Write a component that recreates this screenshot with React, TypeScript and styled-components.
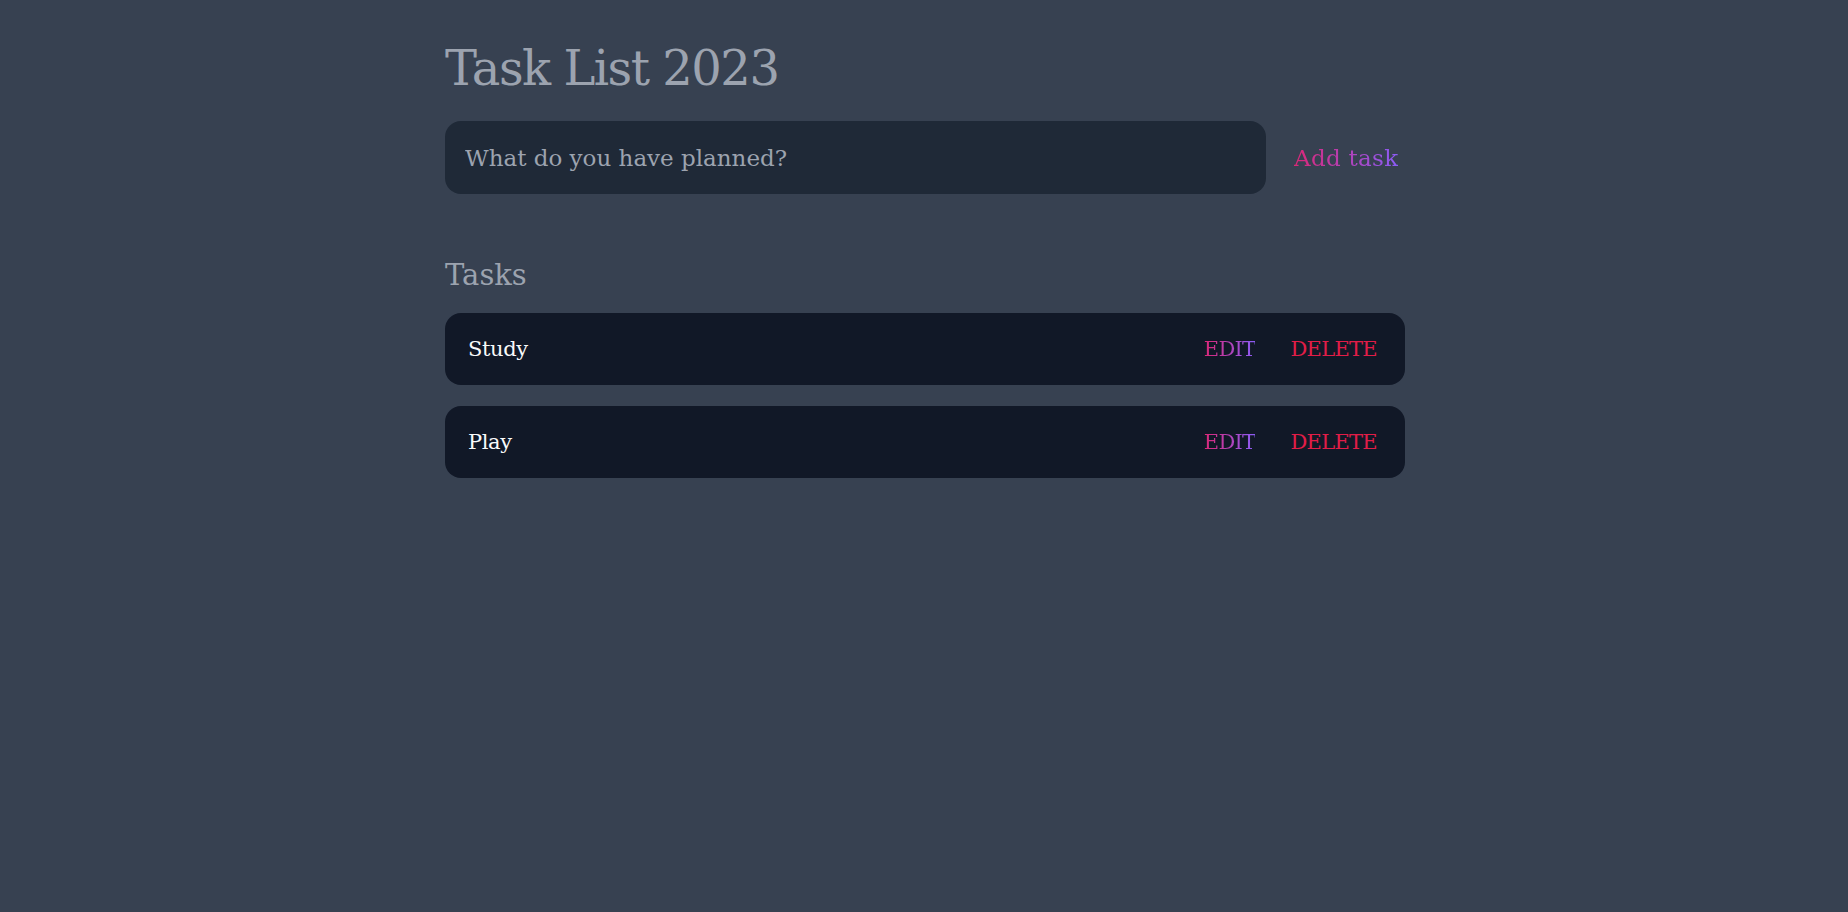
import React, { useState } from "react";
import styled, { createGlobalStyle } from "styled-components";

const GlobalStyle = createGlobalStyle`
  html, body {
    margin: 0;
    padding: 0;
    background: #374151;
  }
  body {
    font-family: "DejaVu Serif", "Liberation Serif", serif;
    min-height: 100vh;
  }
  * { box-sizing: border-box; }
`;

const Page = styled.main`
  width: 960px;
  margin-left: calc(50% - 479px);
  padding-top: 38px;
`;

const Title = styled.h1`
  margin: 0;
  height: 60px;
  line-height: 60px;
  font-size: 48px;
  font-weight: 400;
  letter-spacing: -1.5px;
  color: #9ca3af;
`;

const Form = styled.form`
  display: flex;
  align-items: center;
  margin-top: 23px;
`;

const Input = styled.input`
  flex: 1;
  height: 73px;
  border: none;
  outline: none;
  border-radius: 16px;
  background: #1f2937;
  padding: 0 20px;
  font-family: inherit;
  font-size: 23px;
  letter-spacing: 0;
  color: #e5e7eb;
  &::placeholder {
    color: #9ca3af;
  }
`;

const GradientText = styled.span`
  background: linear-gradient(to right, #db2777, #8b5cf6);
  -webkit-background-clip: text;
  background-clip: text;
  color: transparent;
`;

const AddButton = styled.button`
  width: 139px;
  height: 73px;
  border: none;
  background: none;
  padding: 0 0 0 28px;
  text-align: left;
  font-family: inherit;
  font-size: 23px;
  letter-spacing: 0.3px;
  cursor: pointer;
`;

const SectionTitle = styled.h2`
  margin: 63px 0 0;
  height: 36px;
  line-height: 36px;
  font-size: 29px;
  font-weight: 400;
  letter-spacing: 0;
  color: #9ca3af;
`;

const List = styled.ul`
  list-style: none;
  margin: 20px 0 0;
  padding: 0;
  display: flex;
  flex-direction: column;
  gap: 21px;
`;

const Row = styled.li`
  display: flex;
  align-items: center;
  height: 72px;
  padding: 0 28px 0 23px;
  border-radius: 16px;
  background: #111827;
`;

const TaskName = styled.span`
  flex: 1;
  font-size: 21px;
  letter-spacing: -0.4px;
  color: #f9fafb;
`;

const Actions = styled.div`
  display: flex;
  align-items: center;
  gap: 35px;
`;

const ActionButton = styled.button<{ $danger?: boolean }>`
  border: none;
  background: none;
  padding: 0;
  font-family: inherit;
  font-size: 21px;
  letter-spacing: -0.7px;
  text-transform: uppercase;
  color: ${(p) => (p.$danger ? "#e11d48" : "inherit")};
  cursor: pointer;
`;

const tasks = ["Study", "Play"];

export default function App() {
  const [value, setValue] = useState("");
  return (
    <>
      <GlobalStyle />
      <Page>
        <Title>Task List 2023</Title>
        <Form onSubmit={(e) => e.preventDefault()}>
          <Input
            placeholder="What do you have planned?"
            value={value}
            onChange={(e) => setValue(e.target.value)}
          />
          <AddButton type="submit">
            <GradientText>Add task</GradientText>
          </AddButton>
        </Form>
        <SectionTitle>Tasks</SectionTitle>
        <List>
          {tasks.map((t) => (
            <Row key={t}>
              <TaskName>{t}</TaskName>
              <Actions>
                <ActionButton>
                  <GradientText>Edit</GradientText>
                </ActionButton>
                <ActionButton $danger>Delete</ActionButton>
              </Actions>
            </Row>
          ))}
        </List>
      </Page>
    </>
  );
}
